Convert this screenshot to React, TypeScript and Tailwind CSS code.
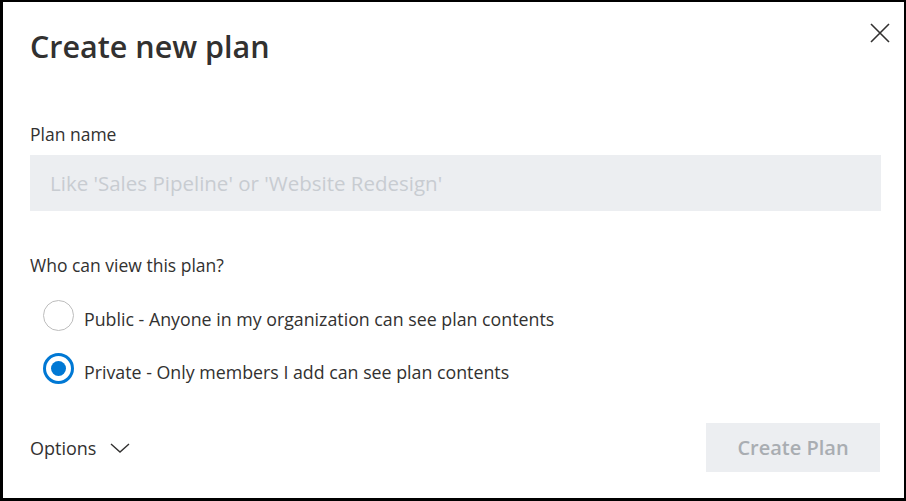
import React, { useState } from 'react';

const font = { fontFamily: '"Segoe UI", "Open Sans", "Noto Sans", sans-serif' };

function Radio({ checked }: { checked: boolean }) {
  return checked ? (
    <span className="flex h-[31px] w-[31px] shrink-0 items-center justify-center rounded-full border-[3px] border-[#0078d4] bg-white">
      <span className="h-[15px] w-[15px] rounded-full bg-[#0078d4]" />
    </span>
  ) : (
    <span className="h-[31px] w-[31px] shrink-0 rounded-full border-[1.5px] border-[#bdbdbd] bg-white" />
  );
}

export default function App() {
  const [visibility, setVisibility] = useState<'public' | 'private'>('private');

  return (
    <div
      style={font}
      className="relative flex h-[501px] w-[906px] flex-col border-t-2 border-r-2 border-b-[3px] border-l-[3px] border-black bg-white pt-[26px] pr-[23px] pl-[27px] text-[#323130]"
    >
      <button className="absolute top-[21px] right-[14px] h-5 w-5" aria-label="Close">
        <svg viewBox="0 0 20 20" width="20" height="20" fill="none" stroke="#323130" strokeWidth="1.6">
          <path d="M1 1 L19 19 M19 1 L1 19" />
        </svg>
      </button>

      <h1 className="text-[30.5px] leading-[36px] font-semibold">Create new plan</h1>

      <label className="mt-[58px] text-[17.5px] leading-[24px]">Plan name</label>
      <input
        style={font}
        className="mt-[9px] h-[56px] w-full bg-[#eceef1] px-[20px] text-[20.5px] outline-none placeholder:text-[#c8ccd1]"
        placeholder="Like 'Sales Pipeline' or 'Website Redesign'"
      />

      <p className="mt-[42px] text-[17.5px] leading-[24px]">Who can view this plan?</p>

      <div className="mt-[23px] flex flex-col gap-[22px] pl-[13px]">
        <div className="flex h-[31px] cursor-pointer items-center gap-[10px]" onClick={() => setVisibility('public')}>
          <Radio checked={visibility === 'public'} />
          <span className="pt-[6px] text-[17.8px] leading-[24px]">Public - Anyone in my organization can see plan contents</span>
        </div>
        <div className="flex h-[31px] cursor-pointer items-center gap-[10px]" onClick={() => setVisibility('private')}>
          <Radio checked={visibility === 'private'} />
          <span className="pt-[6px] text-[17.8px] leading-[24px]">Private - Only members I add can see plan contents</span>
        </div>
      </div>

      <div className="mt-[39px] flex items-center justify-between">
        <button className="flex items-center gap-[14px] text-[18px] leading-[24px]">
          <span>Options</span>
          <svg viewBox="0 0 20 10" width="20" height="10" fill="none" stroke="#323130" strokeWidth="1.4">
            <path d="M1 1 L10 9 L19 1" />
          </svg>
        </button>
        <button className="mr-px h-[49px] w-[174px] bg-[#eceef1] text-[20px] font-semibold text-[#a9adb2]">
          Create Plan
        </button>
      </div>
    </div>
  );
}
